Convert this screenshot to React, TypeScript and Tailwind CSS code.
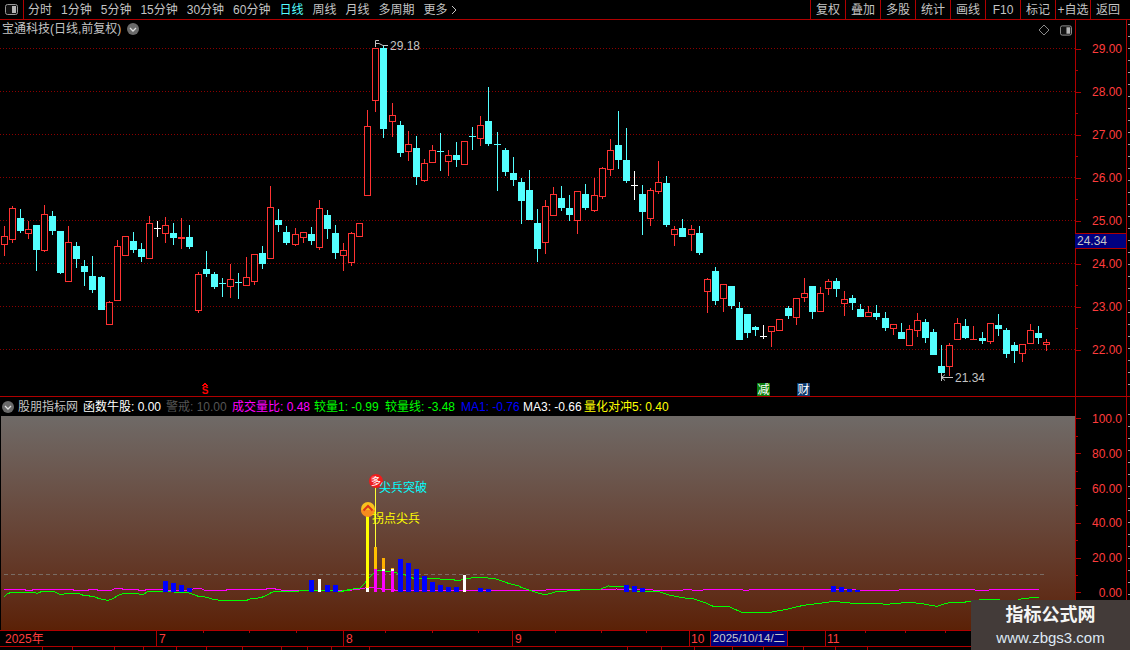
import React from "react";

type C = [number, string, number, number, number, number];
const RED = "#ff3232";
const CYAN = "#54ffff";

const a: C[] = [
[13,"r",138,169,191,228],[37,"r",78,85,176,189],[61,"c",87,114,153,158],[85,"r",124,148,160,177],[109,"c",135,135,210,273],[133,"r",75,103,209,216],[157,"c",93,108,153,165],[181,"c",153,153,279,282],[205,"r",138,187,302,302],[229,"c",186,198,237,264],[253,"c",240,258,276,318],[277,"c",228,288,330,339],[304,"c",288,291,390,390],[328,"r",363,367,431,431],[352,"r",180,199,359,359],[376,"r",169,169,224,228],[400,"c",156,183,210,219],[424,"c",189,207,231,246],[448,"r",108,130,233,233],[472,"w",123,144,144,171],[496,"r",111,136,158,189],[520,"c",129,159,174,195],[544,"R",114,172,176,207],[568,"c",135,171,201,207],[595,"r",276,283,391,399],[619,"c",213,267,282,291],[643,"c",276,282,321,327],[667,"c",294,310,310,351],[691,"r",252,298,317,354],[715,"c",279,307,307,357],[739,"r",231,292,314,318],[763,"r",222,223,302,315],[787,"c",198,219,252,267],[811,"r",18,82,233,233],[835,"c",87,120,135,156],[859,"c",138,156,189,195],[886,"r",144,163,191,198],[910,"r",156,157,170,189],[934,"c",141,162,183,195],[958,"r",60,85,200,210],[982,"c",90,105,147,177],[1006,"c",135,159,219,237],[1030,"r",189,211,224,273],[1054,"r",156,160,245,258],[1078,"r",130,130,167,171],
];
const b: C[] = [
[52,"r",240,289,494,494],[76,"r",55,55,209,245],[100,"c",48,54,297,324],[127,"r",219,256,272,321],[151,"c",273,285,369,381],[175,"r",304,343,362,393],[199,"c",318,354,441,465],[223,"r",387,400,450,456],[247,"r",345,361,395,395],[271,"c",309,364,364,423],[295,"r",360,376,392,438],[319,"c",336,375,390,411],[343,"r",334,334,401,405],[367,"c",291,319,319,360],[391,"r",258,286,323,348],[415,"c",171,273,342,348],[442,"c",306,343,343,483],[466,"c",354,360,426,438],[490,"c",381,429,450,468],[514,"c",444,456,513,582],[538,"c",420,480,570,570],[562,"c",537,579,657,696],[586,"r",510,529,635,672],[610,"r",471,493,554,557],[634,"c",468,504,534,543],[658,"c",495,534,555,573],[682,"r",484,484,571,612],[706,"c",462,492,534,540],[733,"r",444,496,539,546],[757,"r",411,415,497,507],[781,"r",327,361,416,438],[805,"c",243,345,390,417],[829,"c",294,390,453,459],[853,"w",423,466,466,510],[877,"c",465,492,546,615],[901,"r",474,481,563,588],[925,"r",393,457,482,492],[949,"c",438,459,585,591],[973,"r",588,598,611,648],[997,"c",567,594,621,621],[1024,"r",585,598,611,663],[1048,"c",588,609,669,675],
];
const c: C[] = [
[52,"r",204,208,244,309],[76,"c",171,183,273,285],[100,"r",222,223,263,306],[124,"c",228,228,288,297],[148,"c",276,294,390,390],[172,"c",312,312,369,384],[196,"c",348,351,360,378],[220,"w",345,378,378,387],[244,"r",348,349,364,411],[268,"r",326,328,359,359],[295,"c",288,294,318,327],[319,"r",265,265,320,345],[343,"r",204,250,260,276],[367,"c",228,228,306,327],[391,"r",232,250,302,302],[415,"r",207,214,235,255],[439,"c",204,213,237,261],[463,"r",243,268,278,318],[487,"c",255,264,279,300],[511,"c",282,297,321,321],[535,"r",288,307,319,321],[559,"c",285,309,321,330],[586,"c",306,324,354,363],[610,"r",342,343,353,375],[634,"c",339,366,387,387],[658,"r",345,358,404,404],[682,"r",309,331,359,381],[706,"c",327,336,384,399],[730,"c",357,366,435,435],[754,"c",405,468,489,510],[778,"r",399,406,467,498],[802,"r",324,340,387,387],[826,"c",327,348,384,387],[850,"r",348,386,386,389],[877,"c",366,384,393,402],[901,"r",339,340,392,402],[925,"c",312,345,357,378],[949,"c",354,360,432,444],[973,"c",396,405,423,459],[997,"r",403,403,428,456],[1021,"r",342,361,399,399],[1045,"c",348,369,384,402],[1069,"r",387,397,403,423],
];

const candles = [
  ...a.map((d) => ({ d, ox: 0, oy: 180 })),
  ...b.map((d) => ({ d, ox: 350, oy: 30 })),
  ...c.map((d) => ({ d, ox: 690, oy: 210 })),
];

function Candle({ d, ox, oy }: { d: C; ox: number; oy: number }) {
  const [z, t, hi, top, bot, lo] = d;
  const x = Math.floor(ox + z / 3);
  const Y = (v: number) => Math.round(oy + v / 3);
  const col = t === "c" ? CYAN : t === "w" ? "#ffffff" : RED;
  const h = Y(hi), tp = Y(top), bt = Y(bot), l = Y(lo);
  const doji = bt - tp < 2;
  return (
    <g>
      <rect x={x} y={h} width={1} height={Math.max(l - h, 1)} fill={col} />
      {t === "c" || t === "R" ? (
        <rect x={x - 3} y={tp} width={7} height={Math.max(bt - tp, 1)} fill={col} />
      ) : doji ? (
        <rect x={x - 3} y={tp} width={7} height={1} fill={col} />
      ) : (
        <rect x={x - 3} y={tp} width={7} height={bt - tp + 1} fill={col} />
      )}
      {t === "r" && !doji && <rect x={x - 2} y={tp + 1} width={5} height={bt - tp - 1} fill="#000000" />}
    </g>
  );
}

const pts = (arr: number[][], ox: number, oy: number) =>
  arr.map(([x, y]) => `${ox + x / 3},${oy + y / 3}`).join(" ");

const greenLine = [
  pts([[12,80],[20,73],[33,67],[100,67],[112,70],[126,64],[160,64],[180,73],[190,73],[195,70],[235,70],[250,76],[265,76],[270,79],[282,80],[295,85],[305,88],[325,91],[340,85],[360,73],[375,70],[410,70],[420,73],[430,73],[445,64],[485,64],[510,64],[530,67],[560,67],[580,73],[595,79],[605,79],[620,82],[640,88],[660,91],[740,91],[755,85],[770,85],[785,82],[800,76],[815,67],[830,64],[895,64],[900,62],[1000,62],[1020,64],[1050,60]], 0, 570),
  pts([[0,380],[30,373],[60,370],[100,325],[115,316],[160,322],[175,325],[195,330],[220,340],[340,343],[345,346],[360,346],[385,340],[410,337],[460,340],[480,346],[505,355],[540,364]], 340, 465),
  "520,587 535,592 545,595 555,592 580,590 598,589",
  pts([[0,58],[25,48],[70,50],[120,66],[175,64],[210,76],[255,84],[280,86],[310,96],[340,109],[390,111],[425,127],[510,127],[560,118],[610,106],[660,100],[700,94],[760,100],[830,100],[860,103],[925,97],[960,100],[1010,109],[1050,97],[1090,97],[1150,88],[1190,88],[1230,97],[1270,85],[1318,82]], 600, 570),
].join(" ");

const magentaLine = [
  pts([[12,58],[75,58],[75,61],[96,61],[96,58],[220,58],[220,61],[264,61],[264,58],[292,58],[292,61],[333,61],[345,55],[366,55],[366,58],[414,58],[414,61],[436,61],[436,58],[485,58],[511,61],[560,61],[590,55],[603,55],[615,61],[678,61],[678,58],[798,58],[798,55],[825,55],[825,58],[850,61],[895,61],[1020,61],[1080,58]], 0, 570),
  pts([[0,378],[60,372],[90,366],[130,373],[180,376],[540,376]], 340, 465),
  pts([[0,58],[50,57],[160,60],[250,60],[260,58],[285,61],[305,61],[315,58],[425,58],[430,61],[445,61],[450,58],[700,58],[800,61],[1095,58],[1140,61],[1220,58],[1318,60]], 600, 570),
].join(" ");

const bars: [number, number, number, string][] = [
  [163,5,581,"#0000ff"],[171,5,583,"#0000ff"],[179,5,585,"#0000ff"],[187,5,588,"#0000ff"],
  [309,5,580,"#0000ff"],[318,3,579,"#ffffff"],[325,5,585,"#0000ff"],[333,5,585,"#0000ff"],
  [398,5,559,"#0000ff"],[406,5,563,"#0000ff"],[414,5,569,"#0000ff"],[422,5,576,"#0000ff"],[430,5,582,"#0000ff"],[438,5,585,"#0000ff"],[446,5,587,"#0000ff"],[454,5,587,"#0000ff"],[463,3,575,"#ffffff"],[478,5,588,"#0000ff"],[486,5,589,"#0000ff"],
  [624,5,585,"#0000ff"],[632,5,586,"#0000ff"],[640,5,588,"#0000ff"],
  [831,5,586,"#0000ff"],[839,5,587,"#0000ff"],[847,5,589,"#0000ff"],[855,5,590,"#0000ff"],
];

const font = "font-['Liberation_Sans','Noto_Sans_CJK_SC',sans-serif]";

function Chevron({ className }: { className: string }) {
  return (
    <svg viewBox="0 0 12 12" className={className}>
      <circle cx="6" cy="6" r="6" fill="#6a6a6a" />
      <path d="M3 5 L6 8 L9 5" fill="none" stroke="#e0e0e0" strokeWidth="1.3" />
    </svg>
  );
}

function PanelIcon({ className }: { className: string }) {
  return (
    <svg viewBox="0 0 13 11" className={className}>
      <rect x="0.5" y="0.5" width="12" height="10" rx="2" fill="#111" stroke="#9a9a9a" />
      <rect x="7" y="2" width="4" height="7" fill="#b5b5b5" />
    </svg>
  );
}

const nav = ["分时", "1分钟", "5分钟", "15分钟", "30分钟", "60分钟", "日线", "周线", "月线", "多周期"];
const tools = ["复权", "叠加", "多股", "统计", "画线", "F10", "标记", "+自选"];
const upperAxis = ["29.00", "", "28.00", "", "27.00", "", "26.00", "", "25.00", "", "24.00", "", "23.00", "", "22.00"];
const lowerAxis = ["100.0", "", "80.00", "", "60.00", "", "40.00", "", "20.00", "", "0.00"];
const legend: [string, string][] = [
  ["函数牛股: 0.00", "text-white w-[83px]"],
  ["警戒: 10.00", "text-[#555555] w-[66px]"],
  ["成交量比: 0.48", "text-[#ff00ff] w-[82px]"],
  ["较量1: -0.99", "text-[#00ff00] w-[71px]"],
  ["较量线: -3.48", "text-[#00ff00] w-[76px]"],
  ["MA1: -0.76", "text-[#0000ff] w-[62px]"],
  ["MA3: -0.66", "text-white w-[61px]"],
  ["量化对冲5: 0.40", "text-[#ffff00] w-[90px]"],
];
const bottomCells = [43, 30, 42, 29, 33, 30, 36, 39, 26, 24, 38, 258, 34, 33, 38, 31, 40, 32, 32];
const timeTicks = [203, 249, 296, 385, 432, 478, 555, 601, 646, 865, 905, 945];
const sideTicks = Array.from({ length: 52 }, (_, i) => 24 + i * 12);

export default function App() {
  return (
    <div className={`relative flex h-[650px] w-[1130px] flex-col overflow-hidden bg-black text-[12px] leading-none text-[#c4c4c4] ${font}`}>
      {/* top toolbar */}
      <header className="flex h-5 shrink-0 items-stretch border-b border-[#b00000]">
        <div className="flex w-6 items-center justify-center border-r border-[#b00000]">
          <PanelIcon className="h-[11px] w-[13px]" />
        </div>
        <nav className="ml-1 flex items-center gap-[9px]">
          {nav.map((n) => (
            <span key={n} className={n === "日线" ? "text-[#54ffff]" : ""}>{n}</span>
          ))}
          <span className="flex items-center gap-[3px]">
            更多
            <svg viewBox="0 0 6 10" className="h-[10px] w-[6px]">
              <path d="M1 1 L5 5 L1 9" fill="none" stroke="#c4c4c4" />
            </svg>
          </span>
        </nav>
        <div className="ml-auto flex items-stretch">
          {tools.map((t) => (
            <span key={t} className="flex w-[35px] items-center justify-center border-l border-[#b00000]">
              {t}
            </span>
          ))}
          <span className="flex w-[40px] items-center justify-center border-l border-[#b00000] pr-[5px]">返回</span>
        </div>
      </header>

      {/* price panel */}
      <section className="flex h-[377px] shrink-0 border-b border-[#b00000]">
        <div className="relative w-[1075px] shrink-0">
          <div className="absolute left-[2px] top-[3px] flex h-[12px] items-center gap-[6px]">
            <span>宝通科技(日线,前复权)</span>
            <Chevron className="h-3 w-3" />
          </div>
          <div className="absolute right-[3px] top-[4px] flex items-center gap-[10px]">
            <svg viewBox="0 0 12 12" className="h-3 w-3">
              <path d="M6 1 L11 6 L6 11 L1 6 Z" fill="none" stroke="#8a8a8a" />
            </svg>
            <PanelIcon className="h-[11px] w-[12px]" />
          </div>
          <svg viewBox="0 20 1075 376" className="block h-[376px] w-[1075px]" shapeRendering="crispEdges">
            {[0, 1, 2, 3, 4, 5, 6, 7].map((i) => (
              <line key={i} x1="0" x2="1075" y1={48.5 + 43 * i} y2={48.5 + 43 * i} stroke="#8c0000" strokeDasharray="1 2" />
            ))}
            {candles.map((k, i) => (
              <Candle key={i} {...k} />
            ))}
            <g shapeRendering="auto" fill="none" stroke="#c4c4c4">
              <path d="M375.5 47 V40.5 H379 M375.5 43.5 H379 L383 45.5 H388" />
              <path d="M941.5 373 V381 M941.5 377.5 H953 M941.5 377.5 L945 374.5 M941.5 377.5 L945 380.5" />
            </g>
            <text x="390" y="50" fontSize="12" fill="#c4c4c4">29.18</text>
            <text x="955" y="382" fontSize="12" fill="#c4c4c4">21.34</text>
            <path d="M202.5 386 L205 383.5 L207.5 386" fill="none" stroke="#ff0000" strokeWidth="1.5" />
            <text x="205" y="394" fontSize="10" fontWeight="700" fill="#ff0000" textAnchor="middle">S</text>
            <rect x="757" y="383" width="13" height="13" fill="#0a7d0a" />
            <text x="763.5" y="394" fontSize="12" fill="#ffffff" textAnchor="middle">减</text>
            <rect x="797" y="383" width="13" height="13" fill="#0c3a6e" />
            <text x="803.5" y="394" fontSize="12" fill="#ffffff" textAnchor="middle">财</text>
          </svg>
        </div>
        <div className="relative flex w-[51px] shrink-0 flex-col border-l border-[#b00000] pt-[18.5px] text-[#ff3c3c]">
          {upperAxis.map((l, i) => (
            <div key={i} className="flex h-[21.5px] shrink-0 items-center justify-between pr-[4px]">
              <span className={`h-px bg-[#b00000] ${l ? "w-[5px]" : "w-[2px]"}`} />
              <span>{l}</span>
            </div>
          ))}
          <div className="absolute left-[-1px] right-0 top-[213px] flex h-[16px] items-center border-y border-[#b00000] bg-[#000080] pl-[2px] text-[#c8c8c8]">
            24.34
          </div>
        </div>
        <div className="w-1 shrink-0 border-l border-[#b00000]">
          <svg viewBox="0 20 3 376" className="block h-[376px] w-[3px]" shapeRendering="crispEdges">
            {sideTicks.filter((y) => y < 396).map((y) => (
              <rect key={y} x="1" y={y} width="2" height="1" fill="#a0a0a0" />
            ))}
          </svg>
        </div>
      </section>

      {/* indicator panel */}
      <section className="flex h-[233px] shrink-0">
        <div className="flex w-[1075px] shrink-0 flex-col">
          <div className="flex h-[19px] shrink-0 items-center">
            <Chevron className="ml-[2px] h-3 w-3" />
            <span className="ml-[4px] w-[65px] shrink-0 text-[12px]">股朋指标网</span>
            {legend.map(([t, cl]) => (
              <span key={t} className={`shrink-0 whitespace-nowrap ${cl}`}>{t}</span>
            ))}
          </div>
          <div className="relative ml-px h-[214px] shrink-0 bg-gradient-to-b from-[#6f6a67] to-[#5b2106]">
            <svg viewBox="1 416 1074 214" className="block h-[214px] w-[1074px]">
              <line x1="4" x2="1045" y1="574.5" y2="574.5" stroke="#7a6c64" strokeDasharray="4 3" shapeRendering="crispEdges" />
              <polyline points={magentaLine} fill="none" stroke="#ff00ff" shapeRendering="crispEdges" />
              <polyline points={greenLine} fill="none" stroke="#00ff00" shapeRendering="crispEdges" />
              <g shapeRendering="crispEdges">
                {bars.map(([x, w, y, col], i) => (
                  <rect key={i} x={x} y={y} width={w} height={592 - y} fill={col} />
                ))}
                <rect x="366" y="516" width="3" height="72" fill="#ffff00" />
                <rect x="366" y="588" width="3" height="4" fill="#ffffff" />
                <rect x="375" y="485" width="1" height="62" fill="#ffff33" />
                <rect x="374" y="547" width="3" height="22" fill="#ffc000" />
                <rect x="374" y="569" width="3" height="23" fill="#ff00ff" />
                <rect x="382" y="558" width="3" height="11" fill="#ffb000" />
                <rect x="382" y="569" width="3" height="2" fill="#ffffff" />
                <rect x="382" y="571" width="3" height="21" fill="#ff00ff" />
                <rect x="391" y="568" width="3" height="1" fill="#ffc000" />
                <rect x="391" y="569" width="3" height="2" fill="#ffffff" />
                <rect x="391" y="571" width="3" height="21" fill="#ff00ff" />
              </g>
              <circle cx="376" cy="481" r="7" fill="#ee1c1c" />
              <circle cx="374" cy="479" r="3" fill="#ff7a7a" opacity="0.6" />
              <text x="376" y="485" fontSize="10" fill="#ffffff" textAnchor="middle">多</text>
              <circle cx="368" cy="509" r="7" fill="#f7c11e" />
              <path d="M368 509 m-7 1 a7 7 0 0 0 14 0 z" fill="#f58a1f" />
              <path d="M363.5 510.5 L368 506 L372.5 510.5" fill="none" stroke="#d8341a" strokeWidth="2" />
              <text x="379" y="492" fontSize="12" fill="#00ffff">尖兵突破</text>
              <text x="372" y="523" fontSize="12" fill="#ffff00">拐点尖兵</text>
            </svg>
          </div>
        </div>
        <div className="flex w-[51px] shrink-0 flex-col border-l border-[#b00000] pt-[13.3px] text-[#ff3c3c]">
          {lowerAxis.map((l, i) => (
            <div key={i} className="flex h-[17.4px] shrink-0 items-center justify-between pr-[4px]">
              <span className={`h-px bg-[#b00000] ${l ? "w-[5px]" : "w-[2px]"}`} />
              <span>{l}</span>
            </div>
          ))}
        </div>
        <div className="w-1 shrink-0 border-l border-[#b00000]">
          <svg viewBox="0 397 3 233" className="block h-[233px] w-[3px]" shapeRendering="crispEdges">
            {sideTicks.map((y) => (
              <rect key={y} x="1" y={y + 390} width="2" height="1" fill="#a0a0a0" />
            ))}
          </svg>
        </div>
      </section>

      {/* time axis */}
      <footer className="relative flex h-[17px] shrink-0 border-y border-[#b00000] text-[#ff3c3c]">
        <span className="flex w-[156px] items-center pl-[5px]">2025年</span>
        <span className="flex w-[187px] items-center border-l border-[#b00000] pl-[2px]">7</span>
        <span className="flex w-[169px] items-center border-l border-[#b00000] pl-[2px]">8</span>
        <span className="flex w-[177px] items-center border-l border-[#b00000] pl-[2px]">9</span>
        <span className="flex w-[21px] items-center border-l border-[#b00000] pl-[1px]">10</span>
        <span className="flex w-[78px] items-center justify-center whitespace-nowrap border-x border-[#b00000] bg-[#000080] text-[11.5px] text-[#c8c8c8]">2025/10/14/二</span>
        <span className="w-[37px]" />
        <span className="flex w-[60px] items-center border-l border-[#b00000] pl-[1px]">11</span>
        <svg viewBox="0 0 1130 3" className="absolute left-0 top-0 h-[3px] w-[1130px]" shapeRendering="crispEdges">
          {timeTicks.map((x) => (
            <rect key={x} x={x} y="0" width="1" height="2" fill="#b00000" />
          ))}
        </svg>
      </footer>
      <div className="flex h-[3px] shrink-0">
        {bottomCells.map((w, i) => (
          <span key={i} className="h-full shrink-0 border-r border-[#b00000]" style={{ width: w }} />
        ))}
      </div>

      {/* watermark */}
      <div className="absolute bottom-0 right-0 flex h-[50px] w-[159px] flex-col items-center justify-center gap-[3px] bg-[#433b39]">
        <span className="text-[18px] font-bold leading-[22px] text-[#f5f5f5]">指标公式网</span>
        <span className="text-[15px] leading-[17px] text-[#dfe9f5]">www.zbgs3.com</span>
      </div>
    </div>
  );
}
